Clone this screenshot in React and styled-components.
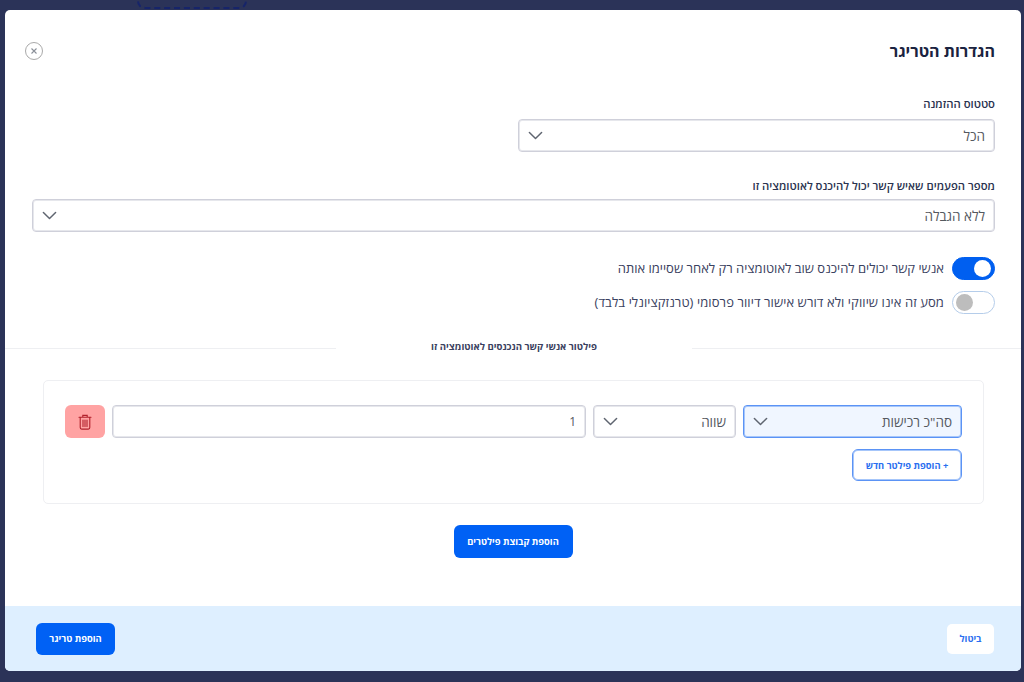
import React from "react";
import styled, { createGlobalStyle } from "styled-components";

const Global = createGlobalStyle`
  html, body { margin: 0; padding: 0; height: 682px; overflow: hidden; background: #2b3358; }
  * { box-sizing: border-box; }
  body { font-family: "Open Sans", "Liberation Sans", sans-serif; color: #1c2541; }
`;

const Backdrop = styled.div`
  position: relative;
  height: 682px;
  padding: 10px 3px 11px 5px;
`;
const DashedSlot = styled.div`
  position: absolute;
  left: 137px;
  top: -20px;
  width: 110px;
  height: 29px;
  border: 2px dashed #16246a;
  border-radius: 8px;
`;
const Modal = styled.div`
  direction: rtl;
  height: 661px;
  background: #fff;
  border-radius: 5px;
  overflow: hidden;
  display: flex;
  flex-direction: column;
`;
const Body = styled.div`
  flex: 1;
  display: flex;
  flex-direction: column;
  min-height: 0;
`;
const Header = styled.header`
  height: 64px;
  padding: 0 26px 0 20px;
  display: flex;
  align-items: center;
  justify-content: space-between;
  margin-top: 9px;
`;
const Title = styled.h1`
  margin: 0;
  font-size: 16px;
  line-height: 22px;
  font-weight: 700;
  color: #1a2340;
`;
const CloseButton = styled.button`
  width: 18px;
  height: 18px;
  padding: 0;
  border: 1.5px solid #a9a9a9;
  border-radius: 50%;
  background: #fff;
  display: flex;
  align-items: center;
  justify-content: center;
  color: #8a8f98;
`;
const Fields = styled.div`
  padding: 0 26px;
`;
const Field = styled.div`
  margin-top: ${(p) => p.$top}px;
  width: ${(p) => p.$width}px;
`;
const Label = styled.label`
  display: block;
  font-size: 11.3px;
  line-height: 16px;
  font-weight: 600;
  color: #2a3350;
  margin-bottom: ${(p) => p.$gap}px;
`;
const Select = styled.div`
  height: 33px;
  width: ${(p) => (p.$width ? p.$width + "px" : "100%")};
  flex: none;
  border: 1px solid ${(p) => (p.$active ? "#5b93f5" : "#cfd0da")};
  box-shadow: inset 0 0 0 1px ${(p) => (p.$active ? "#a6c6fa" : "#e6e7ec")};
  background: ${(p) => (p.$active ? "#f0f6ff" : "#fff")};
  border-radius: 4px;
  padding: 0 9px;
  display: flex;
  align-items: center;
  justify-content: space-between;
  font-size: 13.5px;
  color: #55595f;
`;
const Toggles = styled.div`
  margin-top: 25px;
  display: flex;
  flex-direction: column;
  gap: 11px;
`;
const ToggleRow = styled.div`
  display: flex;
  align-items: center;
  gap: 8px;
  font-size: 13px;
  line-height: 23px;
  color: #3a4160;
  letter-spacing: ${(p) => p.$spacing || 0}px;
`;
const Track = styled.span`
  width: 43px;
  height: 23px;
  flex: none;
  border-radius: 12px;
  display: flex;
  align-items: center;
  padding: 0 3px;
  background: ${(p) => (p.$on ? "#005ff0" : "#fff")};
  border: 1px solid ${(p) => (p.$on ? "#005ff0" : "#b5cdea")};
  justify-content: ${(p) => (p.$on ? "flex-start" : "flex-end")};
`;
const Knob = styled.span`
  width: 17px;
  height: 17px;
  border-radius: 50%;
  background: ${(p) => (p.$on ? "#fff" : "#bdbdbd")};
`;
const Divider = styled.div`
  margin-top: 23px;
  height: 18px;
  display: grid;
  grid-template-columns: 329px 1fr 331px;
  align-items: center;
  text-align: center;
  font-size: 9.6px;
  font-weight: 700;
  color: #3a4160;
`;
const Rule = styled.span`
  height: 1px;
  background: #eeeff2;
  position: relative;
  top: 2px;
`;
const Card = styled.div`
  margin: 25px 37px 0 38px;
  height: 124px;
  border: 1px solid #eeeff2;
  border-radius: 5px;
  padding: 24px 21px 0 21px;
`;
const FilterRow = styled.div`
  display: flex;
  gap: 7px;
  align-items: stretch;
`;
const ValueInput = styled.div`
  flex: 1;
  height: 33px;
  border: 1px solid #cfd0da;
  box-shadow: inset 0 0 0 1px #e6e7ec;
  border-radius: 4px;
  padding: 0 9px;
  display: flex;
  align-items: center;
  font-size: 12px;
  color: #55595f;
`;
const DeleteButton = styled.button`
  width: 40px;
  height: 33px;
  flex: none;
  border: 0;
  padding: 0;
  border-radius: 6px;
  background: #ffa3a3;
  color: #b2222c;
  display: flex;
  align-items: center;
  justify-content: center;
`;
const Outline = styled.button`
  display: block;
  margin-top: 11px;
  width: 110px;
  height: 32px;
  padding: 0;
  background: #fff;
  border: 1px solid #5b93f5;
  box-shadow: inset 0 0 0 1px #a6c6fa;
  border-radius: 6px;
  font: 700 9.3px "Open Sans", "Liberation Sans", sans-serif;
  color: #2a6ff0;
`;
const Center = styled.div`
  margin-top: 21px;
  display: flex;
  justify-content: center;
`;
const Primary = styled.button`
  width: ${(p) => p.$width}px;
  height: ${(p) => p.$height}px;
  padding: 0;
  border: 0;
  border-radius: 6px;
  background: #0061f5;
  color: #fff;
  font: 700 9.3px "Open Sans", "Liberation Sans", sans-serif;
`;
const Footer = styled.footer`
  height: 65px;
  flex: none;
  background: #deefff;
  padding: 0 27px 0 31px;
  display: flex;
  align-items: center;
  justify-content: space-between;
`;
const Ghost = styled.button`
  width: 47px;
  height: 30px;
  padding: 0;
  border: 0;
  border-radius: 5px;
  background: #fff;
  color: #2a6ff0;
  font: 700 9.3px "Open Sans", "Liberation Sans", sans-serif;
`;

const Chevron = () => (
  <svg width="15" height="15" viewBox="0 0 16 16" fill="none" stroke="#5f6570" strokeWidth="1.6" strokeLinecap="round" strokeLinejoin="round">
    <path d="M1.5 4.8 8 11.2l6.5-6.4" />
  </svg>
);
const Cross = () => (
  <svg width="8" height="8" viewBox="0 0 8 8" fill="none" stroke="currentColor" strokeWidth="1.1">
    <path d="M1.5 1.5l5 5M6.5 1.5l-5 5" />
  </svg>
);
const Trash = () => (
  <svg width="14" height="16" viewBox="0 0 14 16" fill="none" stroke="currentColor" strokeWidth="1.1" strokeLinecap="round">
    <path d="M1 3.2h12M4.8 3V1.4h4.4V3M2.2 3.2v10.4c0 .9.6 1.5 1.5 1.5h6.6c.9 0 1.5-.6 1.5-1.5V3.2M5 6v6.5M7 6v6.5M9 6v6.5" />
  </svg>
);

export default function App() {
  return (
    <>
      <Global />
      <Backdrop>
        <DashedSlot />
        <Modal>
          <Body>
            <Header>
              <Title>הגדרות הטריגר</Title>
              <CloseButton aria-label="סגירה"><Cross /></CloseButton>
            </Header>
            <Fields>
              <Field $top={13} $width={477}>
                <Label $gap={7}>סטטוס ההזמנה</Label>
                <Select>הכל<Chevron /></Select>
              </Field>
              <Field $top={26} $width={963}>
                <Label $gap={5}>מספר הפעמים שאיש קשר יכול להיכנס לאוטומציה זו</Label>
                <Select>ללא הגבלה<Chevron /></Select>
              </Field>
              <Toggles>
                <ToggleRow><Track $on><Knob $on /></Track>אנשי קשר יכולים להיכנס שוב לאוטומציה רק לאחר שסיימו אותה</ToggleRow>
                <ToggleRow $spacing={0.08}><Track><Knob /></Track>מסע זה אינו שיווקי ולא דורש אישור דיוור פרסומי (טרנזקציונלי בלבד)</ToggleRow>
              </Toggles>
            </Fields>
            <Divider>
              <Rule />
              <span>פילטור אנשי קשר הנכנסים לאוטומציה זו</span>
              <Rule />
            </Divider>
            <Card>
              <FilterRow>
                <Select $active $width={219}>סה"כ רכישות<Chevron /></Select>
                <Select $width={143}>שווה<Chevron /></Select>
                <ValueInput>1</ValueInput>
                <DeleteButton aria-label="מחיקה"><Trash /></DeleteButton>
              </FilterRow>
              <Outline>+ הוספת פילטר חדש</Outline>
            </Card>
            <Center>
              <Primary $width={119} $height={33}>הוספת קבוצת פילטרים</Primary>
            </Center>
          </Body>
          <Footer>
            <Ghost>ביטול</Ghost>
            <Primary $width={79} $height={32}>הוספת טריגר</Primary>
          </Footer>
        </Modal>
      </Backdrop>
    </>
  );
}
